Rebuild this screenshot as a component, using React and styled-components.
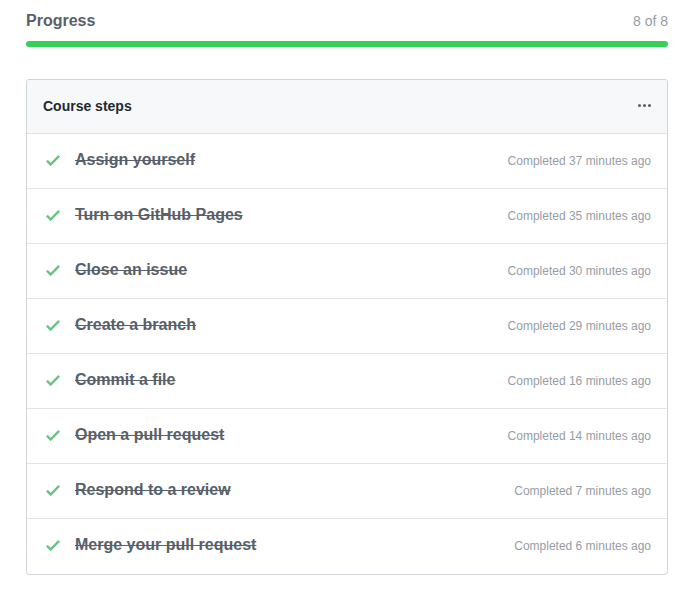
import React from 'react';
import styled, { createGlobalStyle } from 'styled-components';

const GlobalStyle = createGlobalStyle`
    body {
        margin: 0;
        background: #fff;
        font-family: "Liberation Sans", Arial, sans-serif;
    }
`;

const Page = styled.div`
    padding: 9px 19px 0 26px;
`;

const ProgressHead = styled.div`
    display: flex;
    justify-content: space-between;
    align-items: baseline;
    height: 24px;
`;

const Title = styled.h2`
    margin: 0;
    font-size: 16px;
    font-weight: 700;
    color: #586069;
    line-height: 24px;
`;

const Count = styled.span`
    font-size: 14px;
    color: #959da5;
`;

const Bar = styled.div`
    margin-top: 8px;
    height: 6px;
    border-radius: 3px;
    background: #34d058;
`;

const Box = styled.div`
    margin-top: 32px;
    padding-bottom: 1px;
    border: 1px solid #d1d5da;
    border-radius: 3px;
    overflow: hidden;
`;

const BoxHeader = styled.div`
    display: flex;
    align-items: center;
    justify-content: space-between;
    height: 51px;
    padding: 0 16px 2px;
    background: #f6f8fa;
    border-bottom: 1px solid #e1e4e8;
`;

const HeaderTitle = styled.h3`
    margin: 0;
    font-size: 14px;
    font-weight: 700;
    color: #24292e;
`;

const Dots = styled.span`
    display: flex;
    gap: 2px;
    span {
        width: 3px;
        height: 3px;
        border-radius: 50%;
        background: #586069;
    }
`;

const Row = styled.div`
    display: flex;
    align-items: center;
    height: 54px;
    padding: 0 16px 0 18px;
    border-top: ${p => (p.first ? 'none' : '1px solid #e1e4e8')};
`;

const Check = styled.svg`
    width: 14px;
    height: 18.67px;
    fill: #6cc383;
    flex-shrink: 0;
    margin: 0 0 2px 1px;
`;

const StepName = styled.span`
    margin-left: 15px;
    margin-bottom: 2px;
    flex: 1;
    font-size: 16px;
    font-weight: 700;
    color: #586069;
    text-decoration: line-through;
`;

const Done = styled.span`
    font-size: 12px;
    color: #959da5;
`;

const steps = [
    ['Assign yourself', 'Completed 37 minutes ago'],
    ['Turn on GitHub Pages', 'Completed 35 minutes ago'],
    ['Close an issue', 'Completed 30 minutes ago'],
    ['Create a branch', 'Completed 29 minutes ago'],
    ['Commit a file', 'Completed 16 minutes ago'],
    ['Open a pull request', 'Completed 14 minutes ago'],
    ['Respond to a review', 'Completed 7 minutes ago'],
    ['Merge your pull request', 'Completed 6 minutes ago'],
];

const App = () => (
    <Page>
        <GlobalStyle />
        <ProgressHead>
            <Title>Progress</Title>
            <Count>8 of 8</Count>
        </ProgressHead>
        <Bar />
        <Box>
            <BoxHeader>
                <HeaderTitle>Course steps</HeaderTitle>
                <Dots><span /><span /><span /></Dots>
            </BoxHeader>
            {steps.map(([name, time], i) => (
                <Row key={name} first={i === 0}>
                    <Check viewBox="0 0 12 16">
                        <path d="M12 5l-8 8-4-4 1.5-1.5L4 10l6.5-6.5L12 5z" />
                    </Check>
                    <StepName>{name}</StepName>
                    <Done>{time}</Done>
                </Row>
            ))}
        </Box>
    </Page>
);

export default App;
